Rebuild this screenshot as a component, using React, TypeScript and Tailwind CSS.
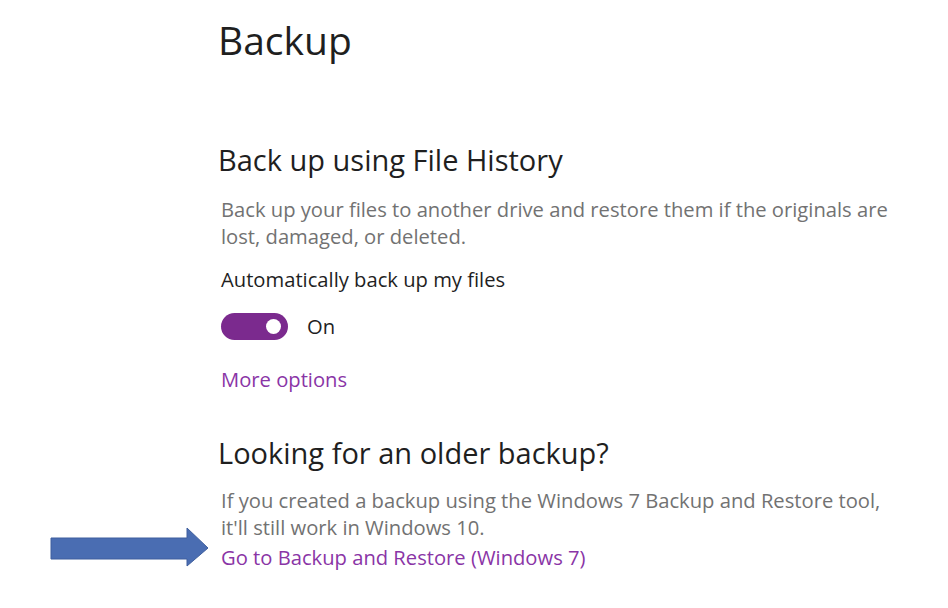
import React from "react";

const font = { fontFamily: '"Open Sans", "Noto Sans", sans-serif' };

function Toggle() {
  return (
    <div className="flex items-center w-[67px] h-[27px] rounded-full bg-[#7b2a8e] justify-end pr-[7px]">
      <div className="w-[15px] h-[15px] rounded-full bg-white" />
    </div>
  );
}

function Arrow() {
  return (
    <svg width="162" height="40" viewBox="0 0 162 40" className="absolute left-[49px] top-[527px]">
      <polygon
        points="2,11 138,11 138,1 159,21 138,39 138,32 2,32"
        fill="#4a6db2"
        stroke="#3f5f9e"
        strokeWidth="1"
      />
    </svg>
  );
}

export default function App() {
  return (
    <div className="relative w-[948px] h-[608px] bg-white overflow-hidden" style={font}>
      <Arrow />
      <div className="flex flex-col pl-[218px] text-[#1f1f1f]">
        <h1 className="mt-[12px] text-[39px] leading-[56px] font-normal">Backup</h1>

        <h2 className="mt-[72px] text-[29px] leading-[40px] font-normal">Back up using File History</h2>
        <p className="mt-[16px] ml-[3px] w-[680px] text-[20.2px] leading-[27px] text-[#727272]">
          Back up your files to another drive and restore them if the originals are lost, damaged, or deleted.
        </p>
        <p className="mt-[16px] ml-[3px] text-[20.2px] leading-[27px]">Automatically back up my files</p>
        <div className="mt-[20px] ml-[3px] flex items-center gap-[19px]">
          <Toggle />
          <span className="text-[20.2px] leading-[27px]">On</span>
        </div>
        <a className="mt-[26px] ml-[3px] text-[20.2px] leading-[27px] text-[#8a35a6]">More options</a>

        <h2 className="mt-[40px] text-[29px] leading-[40px] font-normal">Looking for an older backup?</h2>
        <p className="mt-[14px] ml-[3px] w-[680px] text-[20.2px] leading-[27px] text-[#727272]">
          If you created a backup using the Windows 7 Backup and Restore tool, it'll still work in Windows 10.
        </p>
        <a className="mt-[3px] ml-[3px] text-[20.2px] leading-[27px] text-[#8a35a6]">
          Go to Backup and Restore (Windows 7)
        </a>
      </div>
    </div>
  );
}
